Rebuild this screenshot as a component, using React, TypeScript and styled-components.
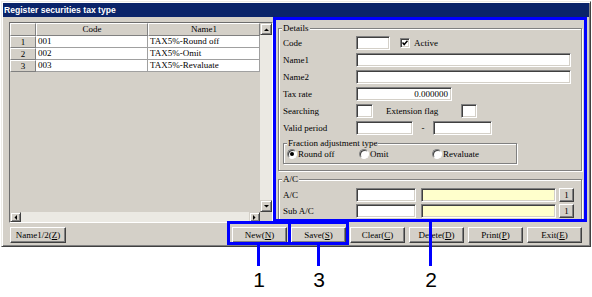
import React from "react";
import styled, { createGlobalStyle } from "styled-components";

const GlobalStyle = createGlobalStyle`
  html, body { margin: 0; padding: 0; background: #ffffff; }
  body {
    font-family: "Liberation Serif", "Times New Roman", serif;
    font-size: 9px;
    color: #000000;
  }
  * { box-sizing: border-box; }
`;

const BLUE = "#0000ff";
const FACE = "#d4d0c8";

const Page = styled.div`
  position: relative;
  width: 592px;
  height: 297px;
  padding: 1px 0 0 1px;
  overflow: hidden;
`;

const Window = styled.div`
  width: 590px;
  height: 246px;
  background: ${FACE};
  border: 1px solid;
  border-color: #ecebe6 #404040 #404040 #ecebe6;
  box-shadow: inset 1px 1px 0 #ffffff, inset -1px -1px 0 #808080;
  padding: 1px;
  display: flex;
  flex-direction: column;
`;

const TitleBar = styled.div`
  height: 14px;
  flex: none;
  background: #0a246a;
  color: #ffffff;
  font-family: "Liberation Sans", Arial, sans-serif;
  font-weight: bold;
  font-size: 8.6px;
  padding-left: 1px;
  display: flex;
  align-items: center;
`;

const Body = styled.div`
  flex: 1;
  display: flex;
  flex-direction: column;
  padding: 5px 4px 0 6px;
`;

const MainRow = styled.div`
  display: flex;
  gap: 3px;
  height: 201px;
`;

/* ---------- grid pane ---------- */

const GridPane = styled.div`
  width: 264px;
  height: 201px;
  border: 1px solid;
  border-color: #6c6c6c #ffffff #ffffff #6c6c6c;
  display: grid;
  grid-template-columns: 250px 12px;
  grid-template-rows: 189px 10px;
  background: ${FACE};
`;

const Table = styled.div`
  display: grid;
  grid-template-columns: 26px 112px 112px;
  grid-template-rows: 13px repeat(3, 12px);
  align-content: start;
`;

const HeadCell = styled.div`
  background: ${FACE};
  border-top: 1px solid #ffffff;
  border-left: 1px solid #ffffff;
  border-right: 1px solid #808080;
  border-bottom: 1px solid #808080;
  display: flex;
  align-items: center;
  justify-content: center;
  line-height: 1;
`;

const DataCell = styled.div`
  background: #ffffff;
  border-right: 1px solid #a0a0a0;
  border-bottom: 1px solid #a0a0a0;
  display: flex;
  align-items: center;
  padding-left: 2px;
  line-height: 1;
  white-space: nowrap;
`;

const VScroll = styled.div`
  display: flex;
  flex-direction: column;
`;

const HScroll = styled.div`
  display: flex;
`;

const Track = styled.div`
  flex: 1;
  background: #ebe9e3;
`;

const Corner = styled.div`
  background: ${FACE};
`;

const ScrollBtn = styled.div<{ $w: number; $h: number }>`
  width: ${(p) => p.$w}px;
  height: ${(p) => p.$h}px;
  flex: none;
  background: ${FACE};
  border: 1px solid;
  border-color: ${FACE} #404040 #404040 ${FACE};
  box-shadow: inset 1px 1px 0 #ffffff, inset -1px -1px 0 #808080;
  display: flex;
  align-items: center;
  justify-content: center;
`;

const Arrow = ({ dir }: { dir: "up" | "down" | "left" | "right" }) => {
  const pts = {
    up: "0,3 5,3 2.5,0.5",
    down: "0,0 5,0 2.5,2.5",
    left: "3,0 3,5 0.5,2.5",
    right: "0,0 0,5 2.5,2.5",
  }[dir];
  const vertical = dir === "up" || dir === "down";
  return (
    <svg width={vertical ? 5 : 3} height={vertical ? 3 : 5} viewBox={vertical ? "0 0 5 3" : "0 0 3 5"}>
      <polygon points={pts} fill="#000" />
    </svg>
  );
};

/* ---------- detail pane ---------- */

const DetailPane = styled.div`
  width: 309px;
  display: flex;
  flex-direction: column;
  padding: 0 3px 0 2px;
`;

const Group = styled.div`
  position: relative;
  border: 1px solid #808080;
  box-shadow: inset 1px 1px 0 #ffffff, 1px 1px 0 #ffffff;
`;

const DetailsGroup = styled(Group)`
  margin-top: 6px;
  padding: 7px 0 6px 4px;
`;

const AcGroup = styled(Group)`
  margin-top: 8px;
  padding: 8px 0 1px 4px;
`;

const FractionGroup = styled(Group)`
  margin-top: 8px;
  width: 234px;
  height: 21px;
  padding: 5px 0 0 3px;
`;

const Legend = styled.span`
  position: absolute;
  top: -6px;
  left: 3px;
  padding: 0 1px;
  background: ${FACE};
  line-height: 11px;
  white-space: nowrap;
`;

const FormGrid = styled.div<{ $gap: number }>`
  display: grid;
  grid-template-columns: 73px 1fr;
  grid-auto-rows: 14px;
  row-gap: ${(p) => p.$gap}px;
`;

const Label = styled.div`
  display: flex;
  align-items: center;
  white-space: nowrap;
`;

const Controls = styled.div`
  display: flex;
  align-items: center;
`;

const Field = styled.div<{ $w: number; $ml?: number; $right?: boolean; $yellow?: boolean }>`
  width: ${(p) => p.$w}px;
  height: 14px;
  flex: none;
  margin-left: ${(p) => p.$ml ?? 0}px;
  background: ${(p) => (p.$yellow ? "#ffffcc" : "#ffffff")};
  border: 1px solid;
  border-color: #808080 #ffffff #ffffff #808080;
  box-shadow: inset 1px 1px 0 #404040, inset -1px -1px 0 ${FACE};
  display: flex;
  align-items: center;
  justify-content: ${(p) => (p.$right ? "flex-end" : "flex-start")};
  padding: 0 3px;
  line-height: 1;
`;

const Check = styled.div`
  width: 10px;
  height: 10px;
  margin-left: 10px;
  background: #ffffff;
  border: 1px solid;
  border-color: #808080 #ffffff #ffffff #808080;
  box-shadow: inset 1px 1px 0 #404040, inset -1px -1px 0 ${FACE};
  display: flex;
  align-items: center;
  justify-content: center;
`;

const InlineText = styled.span<{ $ml?: number; $w?: number; $center?: boolean }>`
  margin-left: ${(p) => p.$ml ?? 0}px;
  width: ${(p) => (p.$w ? `${p.$w}px` : "auto")};
  text-align: ${(p) => (p.$center ? "center" : "left")};
  flex: none;
  white-space: nowrap;
`;

const RadioRow = styled.div`
  display: grid;
  grid-template-columns: 72px 73px auto;
  height: 10px;
`;

const RadioItem = styled.div`
  display: flex;
  align-items: center;
  gap: 1px;
  white-space: nowrap;
`;

const RadioCircle = styled.div<{ $on?: boolean }>`
  width: 10px;
  height: 10px;
  border-radius: 50%;
  background: #ffffff;
  border: 1px solid;
  border-color: #808080 #ffffff #ffffff #808080;
  box-shadow: inset 1px 1px 0 #404040;
  display: flex;
  align-items: center;
  justify-content: center;
  &::after {
    content: "";
    display: ${(p) => (p.$on ? "block" : "none")};
    width: 4px;
    height: 4px;
    border-radius: 50%;
    background: #000000;
  }
`;

const MiniButton = styled.div`
  width: 15px;
  height: 14px;
  margin-left: 3px;
  flex: none;
  background: ${FACE};
  border: 1px solid;
  border-color: #ffffff #404040 #404040 #ffffff;
  box-shadow: inset -1px -1px 0 #808080;
  display: flex;
  align-items: center;
  justify-content: center;
  line-height: 1;
`;

/* ---------- button bar ---------- */

const ButtonBar = styled.div`
  margin-top: 4px;
  height: 16px;
  display: flex;
  padding: 0 3px 0 1px;
`;

const Spacer = styled.div`
  flex: 1;
`;

const ButtonGroup = styled.div`
  display: flex;
  gap: 4px;
`;

const Button = styled.div<{ $w: number }>`
  width: ${(p) => p.$w}px;
  height: 16px;
  background: ${FACE};
  border: 1px solid;
  border-color: #ffffff #404040 #404040 #ffffff;
  box-shadow: inset -1px -1px 0 #808080;
  display: flex;
  align-items: center;
  justify-content: center;
  line-height: 1;
  white-space: nowrap;
  u { text-decoration: underline; }
`;

/* ---------- annotations ---------- */

const Frame = styled.div<{ $l: number; $t: number; $w: number; $h: number }>`
  position: absolute;
  left: ${(p) => p.$l}px;
  top: ${(p) => p.$t}px;
  width: ${(p) => p.$w}px;
  height: ${(p) => p.$h}px;
  border: 3px solid ${BLUE};
  pointer-events: none;
`;

const Leader = styled.div<{ $l: number; $t: number; $h: number }>`
  position: absolute;
  left: ${(p) => p.$l}px;
  top: ${(p) => p.$t}px;
  width: 3px;
  height: ${(p) => p.$h}px;
  background: ${BLUE};
`;

const Num = styled.div<{ $c: number }>`
  position: absolute;
  left: ${(p) => p.$c - 10}px;
  top: 269px;
  width: 20px;
  text-align: center;
  font-family: "Liberation Sans", Arial, sans-serif;
  font-size: 21px;
  line-height: 1;
  color: #000000;
`;

const rows = [
  { no: "1", code: "001", name: "TAX5%-Round off" },
  { no: "2", code: "002", name: "TAX5%-Omit" },
  { no: "3", code: "003", name: "TAX5%-Revaluate" },
];

const buttons: [string, string][] = [
  ["New", "N"],
  ["Save", "S"],
  ["Clear", "C"],
  ["Delete", "D"],
  ["Print", "P"],
  ["Exit", "E"],
];

export default function App() {
  return (
    <>
      <GlobalStyle />
      <Page>
        <Window>
          <TitleBar>Register securities tax type</TitleBar>
          <Body>
            <MainRow>
              <GridPane>
                <Table>
                  <HeadCell />
                  <HeadCell>Code</HeadCell>
                  <HeadCell>Name1</HeadCell>
                  {rows.map((r) => (
                    <React.Fragment key={r.no}>
                      <HeadCell>{r.no}</HeadCell>
                      <DataCell>{r.code}</DataCell>
                      <DataCell>{r.name}</DataCell>
                    </React.Fragment>
                  ))}
                </Table>
                <VScroll>
                  <ScrollBtn $w={12} $h={12}><Arrow dir="up" /></ScrollBtn>
                  <Track />
                  <ScrollBtn $w={12} $h={12}><Arrow dir="down" /></ScrollBtn>
                </VScroll>
                <HScroll>
                  <ScrollBtn $w={11} $h={10}><Arrow dir="left" /></ScrollBtn>
                  <Track />
                  <ScrollBtn $w={11} $h={10}><Arrow dir="right" /></ScrollBtn>
                </HScroll>
                <Corner />
              </GridPane>

              <DetailPane>
                <DetailsGroup>
                  <Legend>Details</Legend>
                  <FormGrid $gap={3}>
                    <Label>Code</Label>
                    <Controls>
                      <Field $w={34} />
                      <Check>
                        <svg width="6" height="6" viewBox="0 0 6 6">
                          <polyline points="0.5,2.5 2.2,4.5 5.5,0.8" fill="none" stroke="#000" strokeWidth="1.5" />
                        </svg>
                      </Check>
                      <InlineText $ml={4}>Active</InlineText>
                    </Controls>

                    <Label>Name1</Label>
                    <Controls><Field $w={215} /></Controls>

                    <Label>Name2</Label>
                    <Controls><Field $w={215} /></Controls>

                    <Label>Tax rate</Label>
                    <Controls><Field $w={96} $right>0.000000</Field></Controls>

                    <Label>Searching</Label>
                    <Controls>
                      <Field $w={17} />
                      <InlineText $ml={13} $w={75}>Extension flag</InlineText>
                      <Field $w={16} />
                    </Controls>

                    <Label>Valid period</Label>
                    <Controls>
                      <Field $w={57} />
                      <InlineText $w={20} $center>-</InlineText>
                      <Field $w={59} />
                    </Controls>
                  </FormGrid>

                  <FractionGroup>
                    <Legend>Fraction adjustment type</Legend>
                    <RadioRow>
                      <RadioItem><RadioCircle $on />Round off</RadioItem>
                      <RadioItem><RadioCircle />Omit</RadioItem>
                      <RadioItem><RadioCircle />Revaluate</RadioItem>
                    </RadioRow>
                  </FractionGroup>
                </DetailsGroup>

                <AcGroup>
                  <Legend>A/C</Legend>
                  <FormGrid $gap={2}>
                    <Label>A/C</Label>
                    <Controls>
                      <Field $w={60} />
                      <Field $w={135} $ml={5} $yellow />
                      <MiniButton>1</MiniButton>
                    </Controls>
                    <Label>Sub A/C</Label>
                    <Controls>
                      <Field $w={60} />
                      <Field $w={135} $ml={5} $yellow />
                      <MiniButton>1</MiniButton>
                    </Controls>
                  </FormGrid>
                </AcGroup>
              </DetailPane>
            </MainRow>

            <ButtonBar>
              <Button $w={56}>Name1/2(<u>Z</u>)</Button>
              <Spacer />
              <ButtonGroup>
                {buttons.map(([t, k]) => (
                  <Button key={t} $w={55}>
                    {t}(<u>{k}</u>)
                  </Button>
                ))}
              </ButtonGroup>
            </ButtonBar>
          </Body>
        </Window>

        <Frame $l={273} $t={17} $w={314} $h={205} />
        <Frame $l={227} $t={221} $w={64} $h={24} />
        <Frame $l={288} $t={221} $w={61} $h={24} />
        <Leader $l={257} $t={245} $h={21} />
        <Leader $l={317} $t={245} $h={21} />
        <Leader $l={429} $t={222} $h={44} />
        <Num $c={259}>1</Num>
        <Num $c={319}>3</Num>
        <Num $c={431}>2</Num>
      </Page>
    </>
  );
}
